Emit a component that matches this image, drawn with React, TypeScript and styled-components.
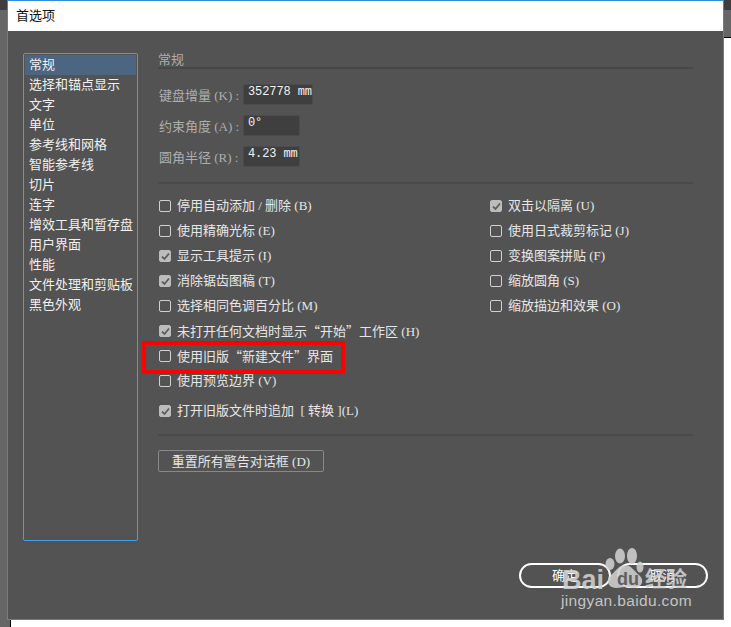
import React from "react";
import styled, { createGlobalStyle } from "styled-components";

const Global = createGlobalStyle`
  html, body { margin: 0; padding: 0; background: #fff; }
  body { width: 731px; height: 627px; overflow: hidden; font-family: "Liberation Serif", "Noto Sans CJK SC", serif; }
`;
const Page = styled.div`
  position: relative; width: 731px; height: 627px; background: #fff; display: flex; align-items: flex-start;
`;
const LeftStrip = styled.div`
  width: 7px; height: 627px; flex: none; background: linear-gradient(#3e3e3e 0 10px, #666 10px);
`;
const RightStrip = styled.div`
  width: 7px; height: 38px; box-sizing: border-box; flex: none; border-bottom: 1px solid #000;
  background: linear-gradient(#3e3e3e 0 10px, #666 10px);
`;
const Center = styled.div`
  width: 717px; flex: none; display: flex; flex-direction: column;
`;
const Foot = styled.div`
  width: 3px; height: 7px; background: #666; border-right: 1px solid #000;
`;
const Dialog = styled.div`
  height: 620px; box-sizing: border-box;
  border: 1px solid #2f8fdc; background: #535353; display: flex; flex-direction: column;
`;
const TitleBar = styled.div`
  height: 30px; flex: none; background: #fff; color: #111; font-size: 13px; line-height: 30px; padding-left: 8px;
`;
const Body = styled.div`
  flex: 1; display: flex; padding: 22px 0 0 15px; align-items: flex-start;
`;
const List = styled.div`
  width: 115px; height: 488px; box-sizing: border-box; flex: none; border: 1px solid #4a9ae8; border-radius: 2px;
  padding: 1px; display: flex; flex-direction: column; background: #535353;
`;
const ListItem = styled.div<{ $on?: boolean }>`
  height: 20px; line-height: 19px; padding-left: 4px; font-size: 13px; color: #f0f0f0; white-space: nowrap;
  background: ${(p) => (p.$on ? "#4c6580" : "transparent")};
`;
const Main = styled.div`
  margin-left: 20px; width: 535px; flex: none; display: flex; flex-direction: column;
`;
const Heading = styled.div`
  color: #aeaeae; font-size: 13px; line-height: 14px; border-bottom: 2px solid #484848; height: 14px;
`;
const Fields = styled.div`
  margin-top: 15px; display: flex; flex-direction: column; gap: 11px;
`;
const FieldRow = styled.div`
  display: flex; align-items: center; height: 20px;
`;
const FieldLabel = styled.div`
  width: 84px; padding-left: 1px; color: #aeaeae; font-size: 13px; white-space: nowrap; flex: none;
`;
const Input = styled.div<{ $w: number }>`
  width: ${(p) => p.$w}px; height: 21px; box-sizing: border-box; background: #3f3f3f; border: 1px solid #4b4b4b; border-radius: 2px;
  color: #f2f2f2; font-size: 12px; line-height: 14px; padding-left: 4px; letter-spacing: -0.1px;
  font-family: "Liberation Mono", monospace; white-space: nowrap;
`;
const Divider = styled.div<{ $top: number }>`
  height: 2px; background: #4a4a4a; margin-top: ${(p) => p.$top}px;
`;
const Columns = styled.div`
  display: flex; margin-top: 10px;
`;
const Col = styled.div<{ $w: number }>`
  width: ${(p) => p.$w}px; padding-left: 1px; box-sizing: border-box; flex: none; display: flex; flex-direction: column;
`;
const Row = styled.div<{ $h?: number }>`
  height: ${(p) => p.$h ?? 25}px; display: flex; align-items: flex-start; color: #e6e6e6; font-size: 13px; white-space: nowrap;
`;
const Box = styled.span<{ $on?: boolean }>`
  width: 12px; height: 12px; box-sizing: border-box; flex: none; margin: 6px 6px 0 0;
  border: 1px solid ${(p) => (p.$on ? "#bcbcbc" : "#d0d0d0")}; border-radius: 2px;
  background: ${(p) => (p.$on ? "#bcbcbc" : "transparent")}; display: flex; align-items: center; justify-content: center;
`;
const RowText = styled.span`
  line-height: 23px;
`;
const Wide = styled.span`
  font-family: "Noto Sans CJK SC", sans-serif;
`;
const ResetButton = styled.div`
  margin-top: 14px; width: 166px; height: 22px; box-sizing: border-box; border: 1px solid #888; border-radius: 2px;
  color: #e6e6e6; font-size: 13px; line-height: 21px; text-align: center;
`;
const Highlight = styled.div`
  position: absolute; left: 142px; top: 341px; width: 203px; height: 33px; box-sizing: border-box; border: 4px solid #f00;
`;
const ActionButton = styled.div<{ $l: number; $w: number }>`
  position: absolute; left: ${(p) => p.$l}px; top: 563px; width: ${(p) => p.$w}px; height: 25px; box-sizing: border-box;
  border: 2px solid #fff; border-radius: 13px; color: #fff; font-size: 13px; line-height: 21px; text-align: center;
`;
const Mark = styled.div`
  position: absolute; color: #d0d0d0; font-family: "Liberation Sans", sans-serif; white-space: nowrap; opacity: 0.88;
`;
const MarkBai = styled(Mark)`
  left: 562px; top: 565px; font-size: 27px; line-height: 30px; font-weight: 700;
`;
const MarkDu = styled(Mark)`
  left: 617px; top: 567px; font-size: 18px; line-height: 24px; font-weight: 700; color: #5f5f5f; opacity: 1;
`;
const MarkCn = styled(Mark)`
  left: 645px; top: 563px; font-size: 21px; line-height: 28px; font-weight: 700; font-family: "Noto Sans CJK SC", sans-serif;
`;
const MarkUrl = styled(Mark)`
  left: 561px; top: 591px; font-size: 15.5px; line-height: 20px; letter-spacing: 0.35px; color: #c4c4c4; opacity: 1;
`;
const Paw = styled.svg`
  position: absolute; left: 604px; top: 548px; width: 40px; height: 41px; opacity: 0.88;
`;

const Check = () => (
  <svg width="9" height="9" viewBox="0 0 9 9"><path d="M1 4.6 L3.5 7 L8 1.5" fill="none" stroke="#5c5c5c" strokeWidth="1.8" /></svg>
);

const CheckRow = ({ on, h, children }: { on?: boolean; h?: number; children: React.ReactNode }) => (
  <Row $h={h}>
    <Box $on={on}>{on && <Check />}</Box>
    <RowText>{children}</RowText>
  </Row>
);

const items = ["常规", "选择和锚点显示", "文字", "单位", "参考线和网格", "智能参考线", "切片", "连字", "增效工具和暂存盘", "用户界面", "性能", "文件处理和剪贴板", "黑色外观"];

export default function App() {
  return (
    <Page>
      <Global />
      <LeftStrip />
      <Center>
        <Dialog>
          <TitleBar>首选项</TitleBar>
          <Body>
            <List>
              {items.map((t, i) => <ListItem key={t} $on={i === 0}>{t}</ListItem>)}
            </List>
            <Main>
              <Heading>常规</Heading>
              <Fields>
                <FieldRow><FieldLabel>键盘增量 (K) :</FieldLabel><Input $w={70}>352778 mm</Input></FieldRow>
                <FieldRow><FieldLabel>约束角度 (A) :</FieldLabel><Input $w={57}>0°</Input></FieldRow>
                <FieldRow><FieldLabel>圆角半径 (R) :</FieldLabel><Input $w={57}>4.23 mm</Input></FieldRow>
              </Fields>
              <Divider $top={16} />
              <Columns>
                <Col $w={331}>
                  <CheckRow>停用自动添加 / 删除 (B)</CheckRow>
                  <CheckRow>使用精确光标 (E)</CheckRow>
                  <CheckRow on>显示工具提示 (I)</CheckRow>
                  <CheckRow on>消除锯齿图稿 (T)</CheckRow>
                  <CheckRow>选择相同色调百分比 (M)</CheckRow>
                  <CheckRow on>未打开任何文档时显示<Wide>“</Wide>开始<Wide>”</Wide>工作区 (H)</CheckRow>
                  <CheckRow>使用旧版<Wide>“</Wide>新建文件<Wide>”</Wide>界面</CheckRow>
                  <CheckRow h={30}>使用预览边界 (V)</CheckRow>
                  <CheckRow h={35} on>打开旧版文件时追加 &nbsp;[ 转换 ](L)</CheckRow>
                </Col>
                <Col $w={200}>
                  <CheckRow on>双击以隔离 (U)</CheckRow>
                  <CheckRow>使用日式裁剪标记 (J)</CheckRow>
                  <CheckRow>变换图案拼贴 (F)</CheckRow>
                  <CheckRow>缩放圆角 (S)</CheckRow>
                  <CheckRow>缩放描边和效果 (O)</CheckRow>
                </Col>
              </Columns>
              <Divider $top={0} />
              <ResetButton>重置所有警告对话框 (D)</ResetButton>
            </Main>
          </Body>
        </Dialog>
        <Foot />
      </Center>
      <RightStrip />
      <Highlight />
      <ActionButton $l={519} $w={92}>确定</ActionButton>
      <ActionButton $l={617} $w={91}>取消</ActionButton>
      <Paw viewBox="0 0 40 41" fill="#d0d0d0">
        <ellipse cx="6" cy="16" rx="4.5" ry="6" />
        <ellipse cx="16" cy="8" rx="5" ry="7.5" />
        <ellipse cx="28" cy="8" rx="5" ry="8" />
        <ellipse cx="36" cy="19" rx="3.5" ry="5.5" />
        <path d="M21 17 C15 17 12 23 7 27 C1 32 4 40 12 40 C16 40 18 39 21 39 C24 39 26 40 30 40 C38 40 41 32 35 27 C30 23 27 17 21 17 Z" />
      </Paw>
      <MarkBai>Bai</MarkBai>
      <MarkDu>du</MarkDu>
      <MarkCn>经验</MarkCn>
      <MarkUrl>jingyan.baidu.com</MarkUrl>
    </Page>
  );
}
